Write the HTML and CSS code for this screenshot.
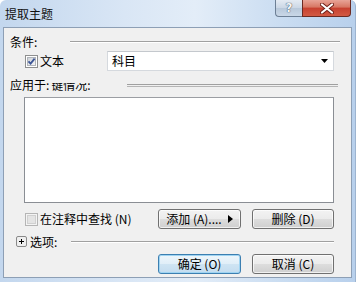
FILE: index.html
```html
<!DOCTYPE html>
<html>
<head>
<meta charset="utf-8">
<link rel="stylesheet" href="styles.css">
</head>
<body>
<div class="window">
  <div class="titlebar">
    <span class="title">提取主题</span>
    <div class="caption">
      <div class="cap-help">?</div>
      <div class="cap-close">
        <svg width="14" height="11" viewBox="0 0 14 11"><path d="M2 1.5 L12 9.5 M12 1.5 L2 9.5" stroke="#6e2018" stroke-width="4" stroke-linecap="round"/><path d="M2 1.5 L12 9.5 M12 1.5 L2 9.5" stroke="#fff" stroke-width="2.2" stroke-linecap="round"/></svg>
      </div>
    </div>
  </div>
  <div class="client">
    <div class="row row-group1">
      <span class="group-label w60">条件:</span>
      <span class="etched end340"></span>
    </div>
    <div class="row row-text">
      <div class="cell-check">
        <span class="checkbox">
          <svg width="13" height="13" viewBox="0 0 13 13"><rect x="0.5" y="0.5" width="12" height="12" fill="#fff" stroke="#8e8f8f"/><rect x="2.5" y="2.5" width="8" height="8" fill="url(#g1)" stroke="#b0b4ba"/><defs><linearGradient id="g1" x1="0" y1="0" x2="1" y2="1"><stop offset="0" stop-color="#cbd0d6"/><stop offset="1" stop-color="#f7f7f7"/></linearGradient></defs><path d="M3.5 6.3 L5.6 8.6 L9.6 3.6" fill="none" stroke="#3c5596" stroke-width="1.8"/></svg>
        </span>
        <span class="check-text">文本</span>
      </div>
      <div class="combo">
        <span class="combo-text">科目</span>
        <svg class="combo-arrow" width="7" height="4" viewBox="0 0 7 4"><path d="M0 0 H7 L3.5 4 Z" fill="#000"/></svg>
      </div>
    </div>
    <div class="row row-group2">
      <span class="group-label apply">应用于:</span>
      <span class="ghost">键情况:</span>
      <span class="apply-lines"></span>
    </div>
    <div class="listbox"></div>
    <div class="row row-btns1">
      <span class="checkbox disabled-box">
        <svg width="13" height="13" viewBox="0 0 13 13"><rect x="0.5" y="0.5" width="12" height="12" fill="#f4f4f4" stroke="#b5b5b5"/><rect x="2.5" y="2.5" width="8" height="8" fill="#e4e4e4" stroke="#d0d0d0"/></svg>
      </span>
      <span class="check-text">在注释中查找 (N)</span>
      <div class="btn-pair">
        <button class="btn w83">添加 (A)....<svg class="tri" width="5" height="8" viewBox="0 0 5 8"><path d="M0 0 L5 4 L0 8 Z" fill="#000"/></svg></button>
        <button class="btn w82">删除 (D)</button>
      </div>
    </div>
    <div class="row row-options">
      <span class="plusbox">
        <svg width="11" height="11" viewBox="0 0 11 11"><rect x="0.5" y="0.5" width="10" height="10" rx="1.5" fill="#efefef" stroke="#8a8a8a"/><path d="M3 5.5 H8 M5.5 3 V8" stroke="#000" stroke-width="1"/></svg>
      </span>
      <span class="opt-text">选项:</span>
      <span class="etched end334"></span>
    </div>
    <div class="row row-btns2">
      <div class="btn-pair">
        <button class="btn btn-default w83">确定 (O)</button>
        <button class="btn w82">取消 (C)</button>
      </div>
    </div>
  </div>
</div>
</body>
</html>
```

FILE: styles.css
```css
* { box-sizing: border-box; }

body {
  margin: 0;
  width: 362px;
  height: 282px;
  overflow: hidden;
  background: #ffffff;
  font-family: "Noto Sans CJK SC", "Noto Sans", sans-serif;
  font-size: 12px;
  color: #000;
}

.window {
  width: 356px;
  height: 290px;
  padding: 0 4px 0 3px;
  display: flex;
  flex-direction: column;
  border-radius: 6px 6px 0 0;
  background: linear-gradient(to right, #c3d7ee 0%, #d9e6f5 35%, #e3edf8 55%, #c9dcf1 80%, #b8d0ec 100%);
  border-right: 1px solid #9db4d0;
}

.titlebar {
  height: 27px;
  display: flex;
  align-items: flex-start;
}

.title {
  margin-left: 2px;
  line-height: 27px;
  font-size: 12px;
  color: #111;
}

.caption {
  margin-left: auto;
  display: flex;
  height: 17px;
}

.cap-help {
  width: 27px;
  height: 17px;
  border: 1px solid #6d7f95;
  border-top: none;
  border-right: none;
  border-radius: 0 0 0 4px;
  background: linear-gradient(#e4ebf3, #cbd7e5 50%, #b8c8da 51%, #c9d7e7);
  color: #f4f6f8;
  text-align: center;
  font-family: "DejaVu Sans", sans-serif;
  font-weight: bold;
  font-size: 12px;
  line-height: 16px;
  text-shadow: 0 0 1px #3b4a5c, 0 0 1px #3b4a5c;
}

.cap-close {
  width: 49px;
  height: 17px;
  border: 1px solid #6b2a22;
  border-top: none;
  border-radius: 0 0 4px 0;
  background: linear-gradient(#e8a497, #d77663 45%, #c7402f 50%, #d25a43);
  display: flex;
  align-items: center;
  justify-content: center;
}

.client {
  width: 349px;
  height: 251px;
  border: 1px solid #8d9fb5;
  background: #f0f0f0;
  display: flex;
  flex-direction: column;
}

.row {
  display: flex;
  align-items: center;
  flex-shrink: 0;
}

.row-group1 { margin-top: 7px; height: 14px; }
.row-text { margin-top: 2px; height: 20px; }
.row-group2 { margin-top: 7px; height: 14px; }
.row-btns1 { margin-top: 6px; height: 20px; }
.row-options { margin-top: 6px; height: 13px; }
.row-btns2 { margin-top: 6px; height: 20px; }

.group-label {
  margin-left: 6px;
  line-height: 14px;
  white-space: nowrap;
}

.w60 { width: 60px; flex-shrink: 0; }

.etched {
  flex: 1;
  height: 2px;
  border-top: 1px solid #a0a0a0;
  border-bottom: 1px solid #ffffff;
}

.end340 { margin-right: 11px; }
.end334 { margin-right: 17px; }

.cell-check {
  width: 103px;
  display: flex;
  align-items: center;
  flex-shrink: 0;
}

.checkbox {
  margin-left: 21px;
  width: 13px;
  height: 13px;
  display: flex;
  flex-shrink: 0;
}

.check-text {
  margin-left: 2px;
  line-height: 14px;
  white-space: nowrap;
}

.combo {
  width: 227px;
  height: 20px;
  background: #fff;
  border: 1px solid #d5d9de;
  border-top-color: #c4c8cd;
  display: flex;
  align-items: center;
  padding-left: 4px;
}

.combo-text { line-height: 14px; }

.combo-arrow { margin-left: auto; margin-right: 5px; }

.ghost {
  margin-left: 2px;
  line-height: 14px;
  white-space: nowrap;
  clip-path: inset(35% 0 0 0);
  color: #000;
}

.apply-lines {
  margin-left: auto;
  margin-right: 13px;
  width: 211px;
  height: 3px;
  border-top: 1px solid #a0a0a0;
  border-bottom: 1px solid #b5b5b5;
}

.listbox {
  margin-top: 5px;
  margin-left: 20px;
  width: 310px;
  height: 106px;
  flex-shrink: 0;
  background: #fff;
  border: 1px solid #8a8e94;
  border-top-color: #9b9ea3;
}

.btn-pair {
  margin-left: auto;
  margin-right: 17px;
  display: flex;
  gap: 11px;
}

.btn {
  height: 20px;
  padding: 0;
  border: 1px solid #707070;
  border-radius: 3px;
  background: linear-gradient(#f3f3f3, #ebebeb 50%, #dddddd 51%, #cfcfcf);
  font-family: "Noto Sans CJK SC", "Noto Sans", sans-serif;
  font-size: 12px;
  line-height: 18px;
  color: #000;
  display: flex;
  align-items: center;
  justify-content: center;
  box-shadow: inset 0 0 0 1px rgba(255,255,255,0.7);
}

.w83 { width: 83px; }
.w82 { width: 82px; }

.tri { margin-left: 6px; }

.btn-default {
  border-color: #3c7fb1;
  background: linear-gradient(#eef6fb, #e0eef8 50%, #cfe4f3 51%, #c3dcef);
  box-shadow: inset 0 0 0 1px #9fd4f2;
}

.plusbox {
  margin-left: 12px;
  width: 11px;
  height: 11px;
  display: flex;
  flex-shrink: 0;
}

.opt-text {
  margin-left: 3px;
  width: 41px;
  line-height: 14px;
  flex-shrink: 0;
}
```
